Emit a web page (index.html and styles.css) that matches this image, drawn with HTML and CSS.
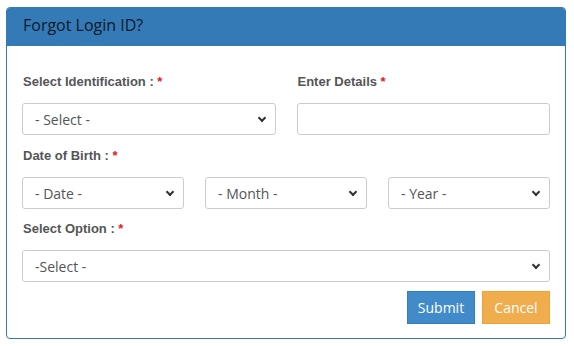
FILE: index.html
```html
<!DOCTYPE html>
<html lang="en">
<head>
    <meta charset="UTF-8">
    <title>Forgot Login ID</title>
    <link rel="stylesheet" href="styles.css">
</head>
<body>
    <div class="panel">
        <div class="panel-heading">Forgot Login ID?</div>
        <div class="panel-body">
            <div class="row two">
                <div class="group">
                    <label>Select Identification : <span class="req">*</span></label>
                    <div class="select-wrap">
                        <select><option>- Select -</option></select>
                    </div>
                </div>
                <div class="group">
                    <label>Enter Details <span class="req">*</span></label>
                    <input type="text" class="field">
                </div>
            </div>

            <div class="group dob">
                <label>Date of Birth : <span class="req">*</span></label>
                <div class="row three">
                    <div class="select-wrap"><select><option>- Date -</option></select></div>
                    <div class="select-wrap"><select><option>- Month -</option></select></div>
                    <div class="select-wrap"><select><option>- Year -</option></select></div>
                </div>
            </div>

            <div class="group">
                <label>Select Option : <span class="req">*</span></label>
                <div class="select-wrap"><select><option>-Select -</option></select></div>
            </div>

            <div class="actions">
                <button class="btn btn-submit">Submit</button>
                <button class="btn btn-cancel">Cancel</button>
            </div>
        </div>
    </div>
</body>
</html>
```

FILE: styles.css
```css
body {
    margin: 0;
    padding: 7px 8px 0 6px;
    background: #fff;
    font-family: "Liberation Sans", Arial, sans-serif;
}

.panel {
    border: 1px solid #337ab7;
    border-radius: 4px;
    overflow: hidden;
}

.panel-heading {
    background: #337ab7;
    color: #111827;
    font-family: "Open Sans", sans-serif;
    font-size: 16px;
    height: 38px;
    line-height: 34px;
    padding-left: 16px;
}

.panel-body {
    padding: 24px 15px 14px 15px;
}

.row {
    display: grid;
    column-gap: 21px;
}

.row.two {
    grid-template-columns: 1fr 1fr;
}

.row.three {
    grid-template-columns: 1fr 1fr 1fr;
}

.group {
    margin-bottom: 9px;
}

.group.dob {
    margin-bottom: 8px;
}

label {
    display: block;
    font-size: 13px;
    font-weight: bold;
    color: #555;
    line-height: 20px;
    padding: 2px 0 0 1px;
    margin-bottom: 11px;
}

.req {
    color: #e02020;
}

.select-wrap {
    position: relative;
}

.select-wrap::after {
    content: "";
    position: absolute;
    right: 11px;
    top: 12px;
    width: 4px;
    height: 4px;
    border-right: 2px solid #333;
    border-bottom: 2px solid #333;
    transform: rotate(45deg);
    pointer-events: none;
}

select,
.field {
    display: block;
    width: 100%;
    height: 32px;
    box-sizing: border-box;
    border: 1px solid #ccc;
    border-radius: 3px;
    background: #fff;
    font-family: "Open Sans", sans-serif;
    font-size: 14px;
    color: #555;
    padding: 0 12px;
    -webkit-appearance: none;
    appearance: none;
    margin: 0;
}

.actions {
    display: flex;
    justify-content: flex-end;
    gap: 7px;
    margin-top: 2px;
}

.btn {
    height: 33px;
    width: 68px;
    border: 1px solid transparent;
    color: #fff;
    font-family: "Open Sans", sans-serif;
    font-size: 14px;
    cursor: pointer;
    padding: 0;
}

.btn-submit {
    background: #428bca;
    border-color: #357ebd;
}

.btn-cancel {
    background: #f0ad4e;
    border-color: #eea236;
}
```
